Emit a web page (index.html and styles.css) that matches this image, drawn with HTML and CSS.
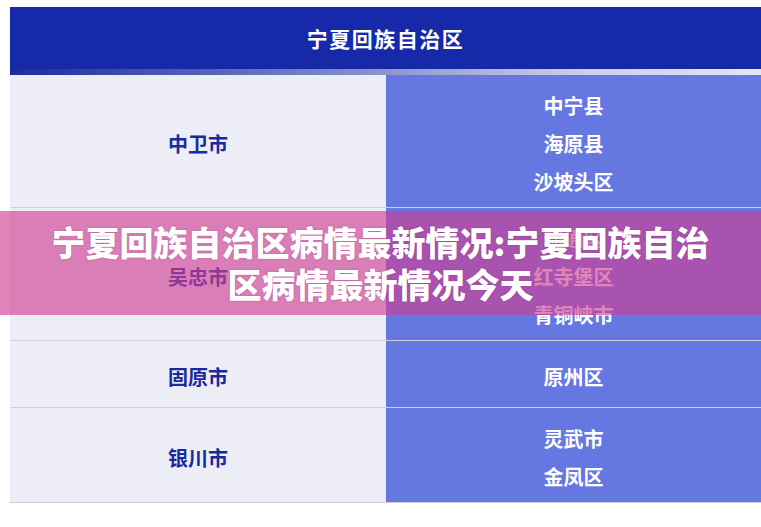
FILE: index.html
```html
<!DOCTYPE html>
<html lang="zh-CN">
<head>
<meta charset="utf-8">
<title>宁夏回族自治区</title>
<link rel="stylesheet" href="styles.css">
</head>
<body>
<div class="page">
  <div class="table">
    <div class="head">宁夏回族自治区</div>
    <div class="head-fade"></div>
    <div class="row">
      <div class="city">中卫市</div>
      <div class="areas"><span>中宁县</span><span>海原县</span><span>沙坡头区</span></div>
    </div>
    <div class="row">
      <div class="city">吴忠市</div>
      <div class="areas"><span>利通区</span><span>红寺堡区</span><span>青铜峡市</span></div>
    </div>
    <div class="row">
      <div class="city">固原市</div>
      <div class="areas"><span>原州区</span></div>
    </div>
    <div class="row">
      <div class="city">银川市</div>
      <div class="areas"><span>灵武市</span><span>金凤区</span></div>
    </div>
  </div>
  <div class="banner">
    <h1 class="banner-title">宁夏回族自治区病情最新情况:宁夏回族自治区病情最新情况今天</h1>
  </div>
</div>
</body>
</html>
```
FILE: styles.css
```css
html, body {
  margin: 0;
  padding: 0;
  background: #ffffff;
}
body {
  font-family: "Noto Sans CJK SC", "Noto Sans", sans-serif;
  width: 761px;
  height: 527px;
  overflow: hidden;
}
.page {
  position: relative;
  padding: 7px 0 0 10px;
}
.table {
  width: 751px;
}
.head {
  height: 62px;
  background: #1529a9;
  color: #ffffff;
  font-size: 21px;
  font-weight: 700;
  letter-spacing: 1.5px;
  display: flex;
  align-items: center;
  justify-content: center;
  box-sizing: border-box;
}
.head-fade {
  height: 6px;
  background: linear-gradient(to right, #1c2c9c, #6a74c0 35%, #c9cde9 75%, #e4e6f3);
}
.row {
  display: grid;
  grid-template-columns: 376px 1fr;
  min-height: 66px;
  border-bottom: 1px solid #cfd0d9;
}
.city {
  background: #ecedf5;
  color: #1a2a9e;
  font-size: 20px;
  font-weight: 700;
  display: flex;
  align-items: center;
  justify-content: center;
  padding-top: 5px;
  box-sizing: border-box;
}
.areas {
  background: #6578e2;
  color: #ffffff;
  font-size: 20px;
  font-weight: 700;
  display: flex;
  flex-direction: column;
  align-items: center;
  justify-content: center;
  padding: 12px 0 6px;
  box-sizing: border-box;
}
.areas span {
  line-height: 38px;
}
.banner {
  position: absolute;
  left: 0;
  top: 211px;
  width: 761px;
  height: 104px;
  background: rgba(206, 62, 146, 0.64);
  display: flex;
  align-items: center;
  justify-content: center;
  padding: 0 46px;
  box-sizing: border-box;
}
.banner-title {
  margin: 0;
  color: #ffffff;
  font-size: 34px;
  font-weight: 900;
  line-height: 42px;
  text-align: center;
  text-shadow: 0 0 2px rgba(120, 30, 90, 0.35);
}
```
